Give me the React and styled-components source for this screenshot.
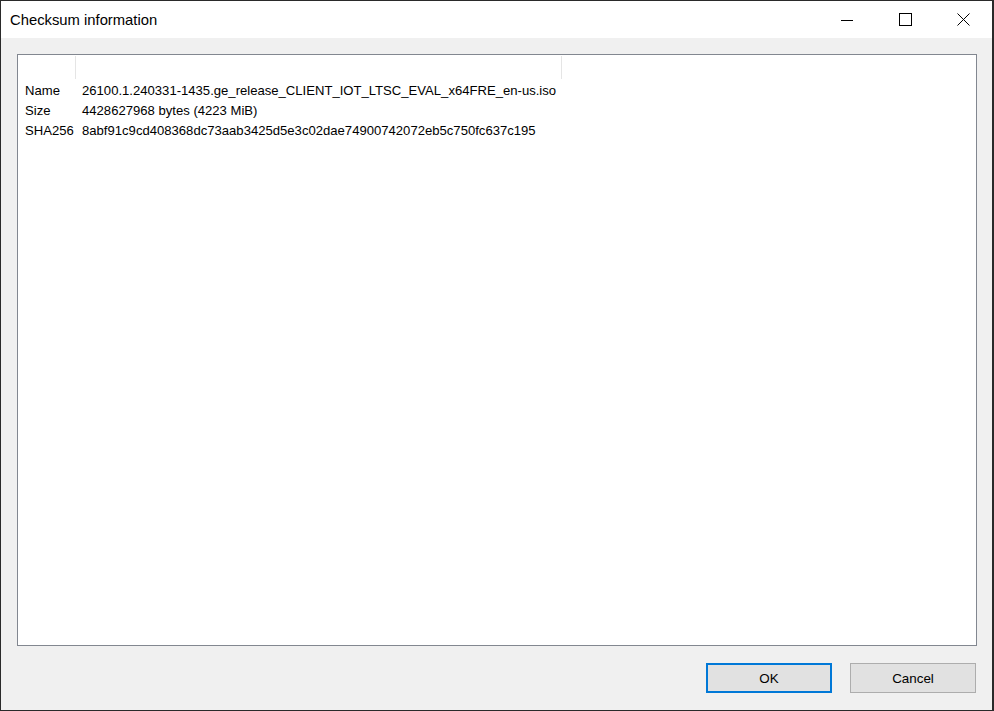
import React from "react";
import styled, { createGlobalStyle } from "styled-components";

const Global = createGlobalStyle`
  html, body { margin: 0; padding: 0; background: #1f1f1f; }
  body { width: 994px; height: 711px; overflow: hidden; }
  * { box-sizing: border-box; }
`;

const Window = styled.div`
  width: 994px;
  height: 711px;
  border: 1px solid #2a2a2a;
  border-right-width: 2px;
  background: #f0f0f0;
  display: flex;
  flex-direction: column;
  font-family: "Liberation Sans", Arial, sans-serif;
  color: #000;
`;

const TitleBar = styled.div`
  height: 37px;
  background: #fff;
  display: flex;
  align-items: center;
  flex-shrink: 0;
`;

const Title = styled.div`
  flex: 1;
  padding-left: 9px;
  font-size: 14.8px;
  padding-top: 1px;
`;

const CaptionButton = styled.div`
  width: 58px;
  height: 37px;
  display: flex;
  align-items: center;
  justify-content: center;
`;

const Body = styled.div`
  flex: 1;
  display: flex;
  flex-direction: column;
  padding: 16px 15px 17px 16px;
`;

const ListBox = styled.div`
  flex: 1;
  background: #fff;
  border: 1px solid #828790;
  display: flex;
  flex-direction: column;
`;

const HeaderRow = styled.div`
  display: flex;
  height: 25px;
  flex-shrink: 0;
`;

const HeaderCell = styled.div`
  width: ${(p) => p.$w}px;
  border-right: 1px solid #e5e5e5;
  margin: 1px 0 1px;
`;

const Rows = styled.div`
  padding-top: 0;
`;

const Row = styled.div`
  display: flex;
  height: 20px;
  align-items: center;
  font-size: 13.1px;
`;

const Cell = styled.div`
  width: ${(p) => (p.$w ? p.$w + "px" : "auto")};
  padding-left: ${(p) => p.$pl}px;
  white-space: nowrap;
`;

const Footer = styled.div`
  display: flex;
  justify-content: flex-end;
  gap: 18px;
  padding-top: 17px;
  padding-right: 1px;
`;

const Button = styled.button`
  width: 126px;
  height: 30px;
  background: #e1e1e1;
  border: ${(p) => (p.$default ? "2px solid #0078d7" : "1px solid #adadad")};
  font-family: inherit;
  font-size: 13.4px;
  color: #000;
  padding: 0;
  margin: 0;
`;

const rows = [
  ["Name", "26100.1.240331-1435.ge_release_CLIENT_IOT_LTSC_EVAL_x64FRE_en-us.iso"],
  ["Size", "4428627968 bytes (4223 MiB)"],
  ["SHA256", "8abf91c9cd408368dc73aab3425d5e3c02dae74900742072eb5c750fc637c195"],
];

export default function App() {
  return (
    <>
      <Global />
      <Window>
        <TitleBar>
          <Title>Checksum information</Title>
          <CaptionButton>
            <svg width="12" height="12" viewBox="0 0 12 12">
              <line x1="0" y1="6.5" x2="12" y2="6.5" stroke="#000" strokeWidth="1" />
            </svg>
          </CaptionButton>
          <CaptionButton>
            <svg width="13" height="13" viewBox="0 0 13 13">
              <rect x="0.5" y="0.5" width="12" height="12" fill="none" stroke="#000" strokeWidth="1" />
            </svg>
          </CaptionButton>
          <CaptionButton>
            <svg width="13" height="13" viewBox="0 0 13 13">
              <path d="M0.5 0.5 L12.5 12.5 M12.5 0.5 L0.5 12.5" stroke="#000" strokeWidth="1" />
            </svg>
          </CaptionButton>
        </TitleBar>
        <Body>
          <ListBox>
            <HeaderRow>
              <HeaderCell $w={58} />
              <HeaderCell $w={486} />
            </HeaderRow>
            <Rows>
              {rows.map(([k, v]) => (
                <Row key={k}>
                  <Cell $w={58} $pl={7}>{k}</Cell>
                  <Cell $pl={6}>{v}</Cell>
                </Row>
              ))}
            </Rows>
          </ListBox>
          <Footer>
            <Button $default>OK</Button>
            <Button>Cancel</Button>
          </Footer>
        </Body>
      </Window>
    </>
  );
}
